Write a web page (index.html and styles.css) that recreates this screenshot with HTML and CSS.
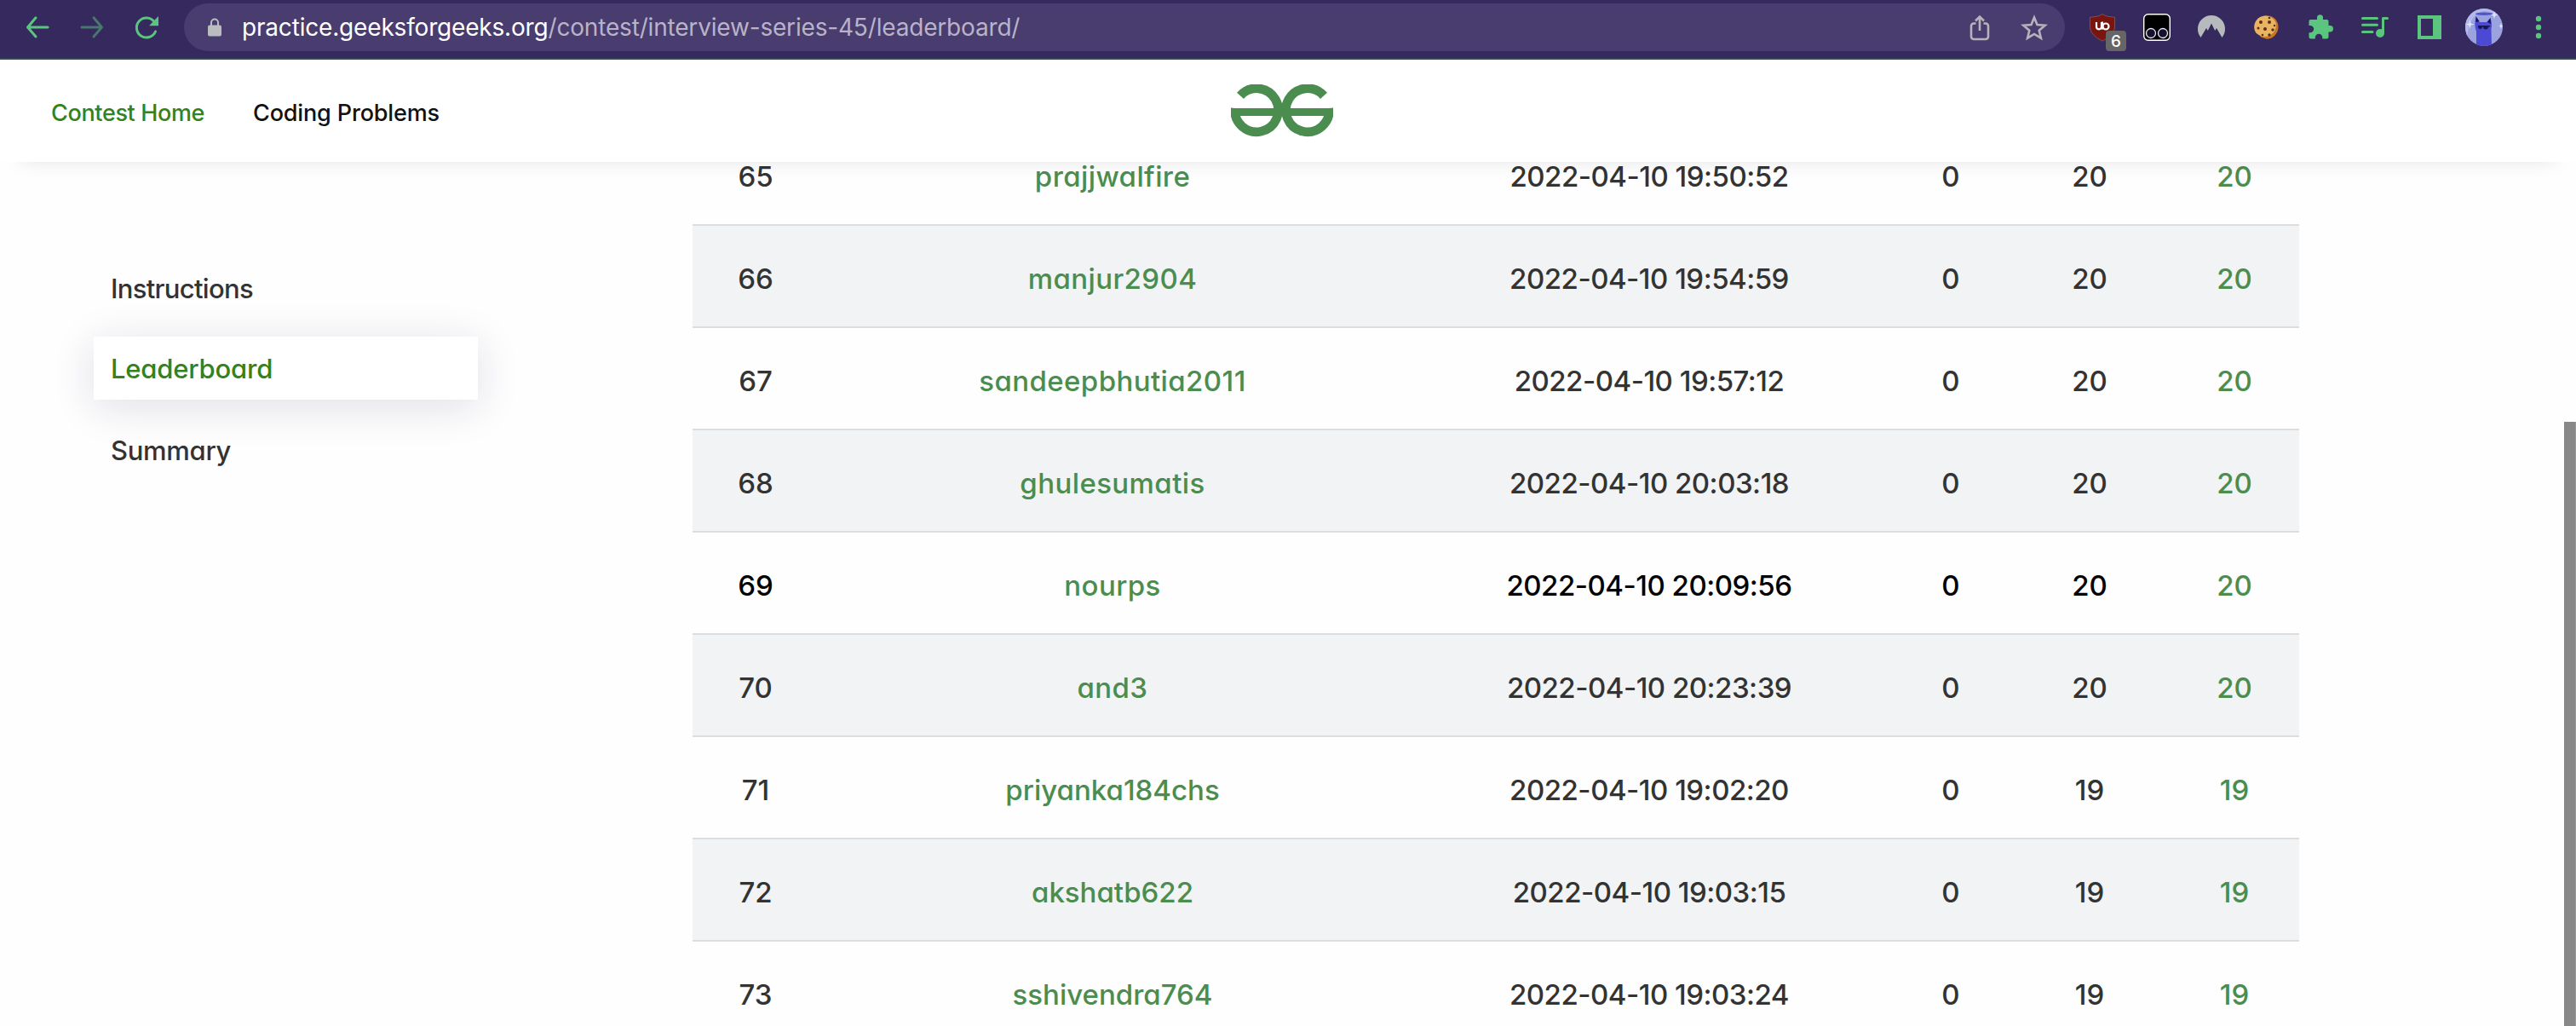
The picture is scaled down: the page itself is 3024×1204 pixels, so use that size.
FILE: index.html
```html
<!DOCTYPE html>
<html lang="en">
<head>
<meta charset="utf-8">
<title>Leaderboard</title>
<link rel="stylesheet" href="styles.css">
</head>
<body>
<div class="toolbar">
  <div class="group">
    <svg class="icon" viewBox="0 0 32 32"><path class="line" d="M28 16H5M14 4.800L4.500 16L14 27"/></svg>
    <svg class="icon dim" viewBox="0 0 32 32"><path class="line" d="M4 16H27M18 4.800L27.500 16L18 27"/></svg>
    <svg class="icon" viewBox="0 0 32 32"><path class="line" d="M25 9.500A11.500 11.500 0 1 0 26.500 21"/><path class="solid" d="M30 3V14.200H19z"/></svg>
  </div>
  <div class="address">
    <svg class="lock" viewBox="0 0 16 22"><path class="lock-arch" d="M4 9V5.500a4 4 0 0 1 8 0V9"/><rect x="0" y="8.500" width="16" height="13" rx="2"/></svg>
    <div class="url"><span class="host">practice.geeksforgeeks.org</span><span class="path">/contest/interview-series-45/leaderboard/</span></div>
    <div class="group">
      <svg class="icon pale" viewBox="0 0 32 32"><path class="thin" d="M11.500 11.500H9a3 3 0 0 0-3 3V27a3 3 0 0 0 3 3H23a3 3 0 0 0 3-3V14.500a3 3 0 0 0-3-3h-2.500M16 20V4M11 8.500L16 3.500l5 5"/></svg>
      <svg class="icon pale" viewBox="0 0 32 32"><path class="thin" d="M16 4.500l3.500 8.500 9.200.7-7 6 2.200 9L16 23.900 8.100 28.700l2.200-9-7-6 9.200-.7z"/></svg>
    </div>
  </div>
  <div class="group">
    <div class="shield">
      <svg class="icon" viewBox="0 0 32 32"><path d="M16 .5C13 3 7 4 1.500 4.200V15C1.500 23 8 28 16 32c8-4 14.500-9 14.500-17V4.200C25 4 19 3 16 .5z" fill="#79140f" stroke="#96716f" stroke-width=".6"/><path d="M9 10v5.300a3 3 0 0 0 6 0V10M16 9.500v9" fill="none" stroke="#fff" stroke-width="2.200"/><circle cx="20" cy="15" r="3.500" fill="none" stroke="#fff" stroke-width="2.200"/></svg>
      <span class="badge">6</span>
    </div>
    <svg class="icon" viewBox="0 0 32 32"><rect x=".7" y=".7" width="30.600" height="30.600" rx="5" fill="#000" stroke="#fff" stroke-width="1.400"/><circle cx="9" cy="23" r="5.500" fill="#17122c" stroke="#e8e4ff" stroke-width="1.300"/><circle cx="23" cy="23" r="5.500" fill="#17122c" stroke="#e8e4ff" stroke-width="1.300"/></svg>
    <svg class="icon" viewBox="0 0 32 32"><path d="M3.500 28A16 16 0 1 1 28.500 28L22 17l-1.800 3L16 11.500 11.800 20 10 17z" fill="#b7babd"/></svg>
    <svg class="icon" viewBox="0 0 32 32"><path d="M16 2.500a13.500 13.500 0 0 1 12 5 14 14 0 0 1-1 17.500q-4.500 5.500-11 4.500l-6-2-2-3-4-2a14 14 0 0 1 12-20z" fill="#c87824"/><path d="M15 2.500a13 13 0 0 1 12.500 8q1.500 5-2 11-5 6-12 5.500-8-1.500-10.500-7A13 13 0 0 1 15 2.500z" fill="#eab563"/><g fill="#593017"><circle cx="10" cy="10" r="2"/><circle cx="20" cy="10" r="2"/><circle cx="15" cy="18" r="2"/><circle cx="24" cy="19" r="1.700"/><circle cx="7" cy="17" r="1.500"/><circle cx="20" cy="25" r="1.700"/><circle cx="20" cy="5" r="1.300"/><circle cx="26" cy="14" r="1.200"/><circle cx="12" cy="25" r="1.300"/></g></svg>
    <svg class="icon" viewBox="0 0 32 32"><path class="solid" d="M4.500 7H12V4.800a3.500 3.500 0 0 1 7 0V7h4.500a2 2 0 0 1 2 2v5h1.800a3.700 3.700 0 0 1 0 7.400H25.500V27a2.500 2.500 0 0 1-2.500 2.500H18.300V28a4.200 4.200 0 0 0-8.400 0v1.500H5A2.500 2.500 0 0 1 2.500 27V22.300H4a4.200 4.200 0 0 0 0-8.400H2.500V9a2 2 0 0 1 2-2z"/></svg>
    <svg class="icon" viewBox="0 0 32 32"><path class="line" d="M1.500 5.500H18.500M1.500 13.300H18.500M1.500 21.500H13"/><path class="line" d="M25.500 23V5.500H30.500"/><circle class="solid" cx="22" cy="23" r="5"/></svg>
    <svg class="icon" viewBox="0 0 32 32"><path class="solid" fill-rule="evenodd" d="M2 2H30V30H2zM6 6V26H20V6z"/></svg>
    <svg class="avatar" viewBox="0 0 44 44"><defs><clipPath id="face"><circle cx="22" cy="22" r="22"/></clipPath></defs><g clip-path="url(#face)"><rect width="44" height="44" fill="#9ba3df"/><path d="M0 0H44V12Q31 3 22 3T5 18L0 44z" fill="#b4b9ea"/><ellipse cx="22" cy="6.300" rx="10" ry="1.700" fill="#5552cf"/><path d="M13 44V27Q10 20 12.500 10L17 16H25L29.500 11Q32 18 30.500 24L31 44z" fill="#4c4ad5"/><path d="M12.500 9v7l4-1zM29.500 11l.5 7-4-2zM15 20h14v1.500h-2q0 3-3 3t-3-3h-1q0 2.500-2.500 2.500T15 21z" fill="#17164f"/><path d="M5.500 13l1 4.500 4 1-4 1-1 4.500-1-4.500-4-1 4-1zM34 3l1 3.500 3 1-3 1-1 3.500-1-3.500-3-1 3-1zM42 17l1 3 2 .5-2 .5-1 3-1-3-2-.5 2-.5z" fill="#e3e6ff"/></g></svg>
    <svg class="icon" viewBox="0 0 32 32"><circle class="solid" cx="16" cy="6" r="3.200"/><circle class="solid" cx="16" cy="16" r="3.200"/><circle class="solid" cx="16" cy="26" r="3.200"/></svg>
  </div>
</div>
<header class="header">
  <nav class="nav"><a class="nav-link active">Contest Home</a><a class="nav-link problems">Coding Problems</a></nav>
  <svg class="logo" viewBox="0 0 360 186"><g class="logo-stroke"><path d="M327 40A76.500 76.500 0 1 0 346 84"/><path d="M33 40A76.500 76.500 0 1 1 14 84"/></g><path class="logo-bar" d="M0 84H360V111H0z"/></svg>
</header>
<main class="page">
  <aside class="side">
    <a class="side-link first">Instructions</a>
    <a class="side-link current">Leaderboard</a>
    <a class="side-link">Summary</a>
  </aside>
  <table class="board">
    <colgroup><col class="c-rank"><col class="c-name"><col class="c-date"><col class="c-zero"><col class="c-score"><col class="c-total"></colgroup>
    <tbody>
    <tr><td>65</td><td class="green name">prajjwalfire</td><td class="date">2022-04-10 19:50:52</td><td>0</td><td>20</td><td class="green">20</td></tr>
    <tr><td>66</td><td class="green name">manjur2904</td><td class="date">2022-04-10 19:54:59</td><td>0</td><td>20</td><td class="green">20</td></tr>
    <tr><td>67</td><td class="green name">sandeepbhutia2011</td><td class="date">2022-04-10 19:57:12</td><td>0</td><td>20</td><td class="green">20</td></tr>
    <tr><td>68</td><td class="green name">ghulesumatis</td><td class="date">2022-04-10 20:03:18</td><td>0</td><td>20</td><td class="green">20</td></tr>
    <tr class="me"><td>69</td><td class="green name">nourps</td><td class="date">2022-04-10 20:09:56</td><td>0</td><td>20</td><td class="green">20</td></tr>
    <tr><td>70</td><td class="green name">and3</td><td class="date">2022-04-10 20:23:39</td><td>0</td><td>20</td><td class="green">20</td></tr>
    <tr><td>71</td><td class="green">priyanka184chs</td><td class="date">2022-04-10 19:02:20</td><td>0</td><td>19</td><td class="green">19</td></tr>
    <tr><td>72</td><td class="green">akshatb622</td><td class="date">2022-04-10 19:03:15</td><td>0</td><td>19</td><td class="green">19</td></tr>
    <tr><td>73</td><td class="green">sshivendra764</td><td class="date">2022-04-10 19:03:24</td><td>0</td><td>19</td><td class="green">19</td></tr>
    </tbody>
  </table>
  <div class="scrollbar"></div>
</main>
</body>
</html>
```
FILE: styles.css
```css
* { box-sizing: border-box; }
body {
  margin: 0;
  height: 1204px;
  display: flex;
  flex-direction: column;
  overflow: hidden;
  background: #fefefe;
  color: #333;
  font-family: Inter, "Liberation Sans", sans-serif;
  font-weight: 500;
  font-feature-settings: "cv11";
}

/* browser toolbar */
.toolbar {
  flex: none;
  height: 70px;
  padding: 4px 28px 8px;
  display: flex;
  gap: 28px;
  align-items: center;
  background: #35295d;
  border-bottom: 2px solid #33475f;
}
.group { display: flex; gap: 32px; align-items: center; }
.icon { width: 32px; height: 32px; display: block; overflow: visible; }
.line { fill: none; stroke: #5bc57f; stroke-width: 3; stroke-linecap: round; stroke-linejoin: round; }
.solid { fill: #5bc57f; }
.dim { opacity: .5; }
.pale { opacity: .95; }
.thin { fill: none; stroke: #bcb9bf; stroke-width: 2.600; }
.address {
  flex: 1;
  height: 56px;
  padding: 0 20px 0 28px;
  border-radius: 28px;
  display: flex;
  align-items: center;
  background: #493c6e;
}
.lock { width: 16px; height: 22px; fill: #b9bdc0; }
.lock-arch { fill: none; stroke: #b9bdc0; stroke-width: 2; }
.url {
  flex: 1;
  margin-left: 24px;
  font-size: 28px;
  line-height: 40px;
  font-weight: 400;
  font-feature-settings: normal;
  letter-spacing: -.18px;
}
.host { color: #fff; }
.path { color: #b9b3c8; }
.shield { position: relative; }
.badge {
  position: absolute;
  left: 20px;
  top: 20px;
  width: 24px;
  height: 24px;
  border-radius: 4px;
  background: #666;
  color: #fff;
  font-size: 19px;
  line-height: 26px;
  text-align: center;
}
.avatar { width: 44px; height: 44px; margin: 0 -6px; }

/* site header */
.header {
  position: relative;
  z-index: 1;
  flex: none;
  height: 120px;
  display: flex;
  align-items: center;
  background: #fff;
  box-shadow: 0 24px 20px -24px rgba(0, 0, 0, .1);
}
.nav {
  width: 1445px;
  padding: 6px 0 0 60px;
  display: flex;
  font-size: 27px;
  line-height: 36px;
  letter-spacing: -.15px;
}
.nav-link { width: 237px; white-space: nowrap; color: #111; }
.nav-link.active { color: #34821a; letter-spacing: -.35px; }
.logo { width: 120px; height: 62px; }
.logo-stroke { fill: none; stroke: #4b8d4f; stroke-width: 32; }
.logo-bar { fill: #4b8d4f; }

/* page body */
.page { flex: 1; min-height: 0; display: flex; align-items: flex-start; overflow: hidden; }
.side { width: 813px; padding: 110px 0 0 110px; display: flex; flex-direction: column; gap: 21px; }
.side-link {
  width: 451px;
  height: 74px;
  padding: 2px 0 0 20px;
  font-size: 31px;
  line-height: 74px;
  letter-spacing: -.3px;
}
.side-link.first { letter-spacing: -.7px; }
.side-link.current {
  padding-top: 1px;
  letter-spacing: -.2px;
  color: #34821a;
  background: #fff;
  box-shadow: 0 8px 50px rgba(25, 25, 90, .14);
}

.board {
  width: 1886px;
  margin-top: -47px;
  table-layout: fixed;
  border-collapse: separate;
  border-spacing: 0;
  font-size: 33px;
  line-height: 40px;
}
.board td {
  height: 120px;
  padding: 5px 0 0;
  border-top: 2px solid #dcddde;
  text-align: center;
}
.board tr:nth-child(even) { background: #f1f3f5; }
.board .green { color: #4b8d4f; }
.board .name { letter-spacing: .4px; }
.board .date { letter-spacing: -.5px; }
.me { color: #000; }
.c-rank { width: 148px; }
.c-name { width: 690px; }
.c-date { width: 570px; }
.c-zero { width: 138px; }
.c-score { width: 188px; }
.c-total { width: 152px; }

.scrollbar { width: 14px; height: 709px; margin: 305px 0 0 auto; background: #888; border-right: 1px solid #999; }
```
